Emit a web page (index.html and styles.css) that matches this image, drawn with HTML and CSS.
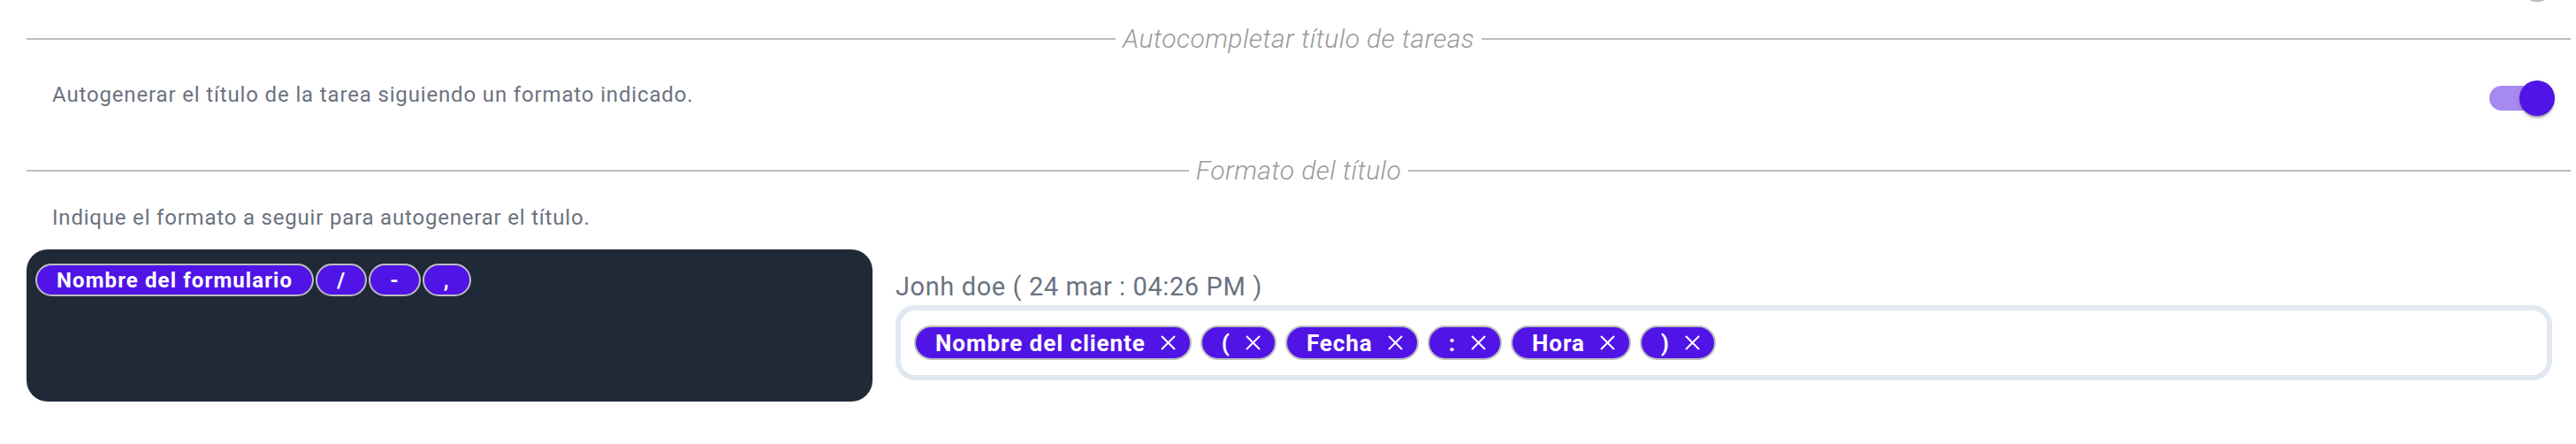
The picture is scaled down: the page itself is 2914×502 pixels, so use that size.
FILE: index.html
```html
<!DOCTYPE html>
<html lang="es">
<head>
<meta charset="utf-8">
<title>Formato del título</title>
<link rel="stylesheet" href="styles.css">
</head>
<body>
<div class="page">
  <span class="peek"></span>
  <div class="divider"><span class="divider-label">Autocompletar título de tareas</span></div>
  <div class="setting-row">
    <p class="setting-text">Autogenerar el título de la tarea siguiendo un formato indicado.</p>
    <span class="switch" role="switch" aria-checked="true"><span class="switch-track"></span><span class="switch-thumb"></span></span>
  </div>
  <div class="divider divider-second"><span class="divider-label">Formato del título</span></div>
  <p class="hint">Indique el formato a seguir para autogenerar el título.</p>
  <div class="format-grid">
    <div class="palette">
      <span class="tag">Nombre del formulario</span>
      <span class="tag">/</span>
      <span class="tag">-</span>
      <span class="tag">,</span>
    </div>
    <div class="builder">
      <div class="preview">Jonh doe ( 24 mar : 04:26 PM )</div>
      <div class="tag-input">
        <span class="chip">Nombre del cliente<svg viewBox="0 0 17 17"><path d="M1 1L16 16M16 1L1 16"/></svg></span>
        <span class="chip">(<svg viewBox="0 0 17 17"><path d="M1 1L16 16M16 1L1 16"/></svg></span>
        <span class="chip">Fecha<svg viewBox="0 0 17 17"><path d="M1 1L16 16M16 1L1 16"/></svg></span>
        <span class="chip">:<svg viewBox="0 0 17 17"><path d="M1 1L16 16M16 1L1 16"/></svg></span>
        <span class="chip">Hora<svg viewBox="0 0 17 17"><path d="M1 1L16 16M16 1L1 16"/></svg></span>
        <span class="chip">)<svg viewBox="0 0 17 17"><path d="M1 1L16 16M16 1L1 16"/></svg></span>
      </div>
    </div>
  </div>
</div>
</body>
</html>
```

FILE: styles.css
```css
html, body {
  margin: 0;
  background: #ffffff;
}

body {
  font-family: Roboto, "Liberation Sans", sans-serif;
}

.page {
  position: relative;
  padding: 26px 6px 0 30px;
}

.peek {
  position: absolute;
  top: -38px;
  left: 2850px;
  width: 40px;
  height: 40px;
  border-radius: 50%;
  background: #b8b8b8;
}

.divider {
  display: flex;
  align-items: center;
  height: 36px;
}

.divider::before,
.divider::after {
  content: "";
  flex: 1;
  border-top: 2px solid #bdbdbd;
}

.divider-second {
  margin-top: 15px;
}

.divider-label {
  padding: 0 8px;
  font-size: 30px;
  line-height: 36px;
  font-style: italic;
  font-weight: 300;
  letter-spacing: 0.4px;
  color: #9a9a9a;
}

.setting-row {
  display: flex;
  align-items: center;
  justify-content: space-between;
  height: 98px;
  padding: 0 18px 0 29px;
}

.setting-text {
  margin: 0 0 8px;
  font-size: 24px;
  line-height: 36px;
  letter-spacing: 0.85px;
  color: #6b7280;
}

.switch {
  position: relative;
  flex: none;
  width: 74px;
  height: 40px;
}

.switch-track {
  position: absolute;
  left: 0;
  top: 6px;
  width: 68px;
  height: 28px;
  border-radius: 14px;
  background: #a789f2;
}

.switch-thumb {
  position: absolute;
  right: 0;
  top: 0;
  width: 40px;
  height: 40px;
  border-radius: 50%;
  background: #5014e6;
  box-shadow: 0 4px 2px -2px rgba(0, 0, 0, 0.2), 0 2px 2px 0 rgba(0, 0, 0, 0.14), 0 2px 6px 0 rgba(0, 0, 0, 0.12);
}

.hint {
  margin: 17px 0 0 29px;
  font-size: 24px;
  line-height: 36px;
  letter-spacing: 0.8px;
  color: #6b7280;
}

.format-grid {
  display: grid;
  grid-template-columns: 957px 1fr;
  column-gap: 26px;
  align-items: center;
  margin-top: 18px;
  padding-right: 21px;
}

.palette {
  box-sizing: border-box;
  height: 172px;
  padding: 16px 10px;
  border-radius: 24px;
  background: #1f2937;
  display: flex;
  flex-wrap: wrap;
  align-content: flex-start;
  gap: 2px;
}

.tag {
  display: inline-flex;
  align-items: center;
  box-sizing: border-box;
  height: 37px;
  padding: 0 22px;
  border: 2px solid #bdbdbd;
  border-radius: 20px;
  background: #5014e6;
  color: #ffffff;
  font-size: 24px;
  font-weight: 700;
  letter-spacing: 1.1px;
}

.builder {
  display: flex;
  flex-direction: column;
}

.preview {
  margin-bottom: 3px;
  font-size: 29px;
  line-height: 36px;
  letter-spacing: 0.6px;
  color: #6b7280;
}

.tag-input {
  display: flex;
  flex-wrap: wrap;
  gap: 10px;
  padding: 17px 15px;
  border: 6px solid #e2e8f0;
  border-radius: 22px;
}

.chip {
  display: inline-flex;
  align-items: center;
  gap: 17px;
  box-sizing: border-box;
  height: 39px;
  padding: 0 16px 0 22px;
  border: 2px solid #bdbdbd;
  border-radius: 20px;
  background: #5014e6;
  color: #ffffff;
  font-size: 26px;
  font-weight: 700;
  letter-spacing: 0.95px;
}

.chip svg {
  width: 17px;
  height: 17px;
  fill: none;
  stroke: #ffffff;
  stroke-width: 2;
}
```
